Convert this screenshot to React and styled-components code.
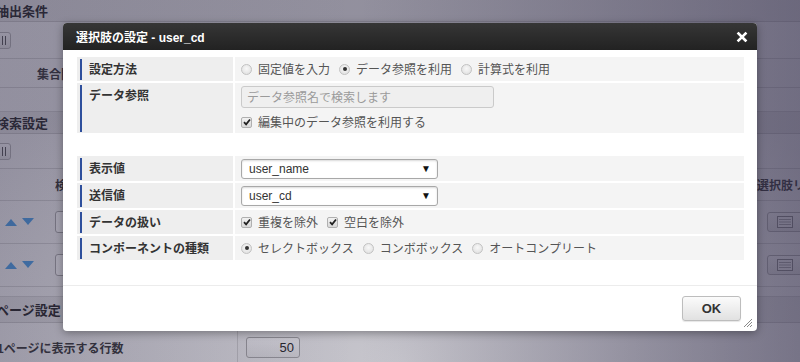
import React from "react";
import styled, { createGlobalStyle } from "styled-components";

const GlobalStyle = createGlobalStyle`
  html, body {
    margin: 0;
    padding: 0;
    width: 800px;
    height: 362px;
    overflow: hidden;
    background: #f2f2f2;
  }
  body {
    font-family: "Liberation Sans", "Noto Sans CJK JP", sans-serif;
    font-size: 12px;
    color: #333;
  }
`;

const Screen = styled.div`
  position: relative;
  width: 800px;
  height: 362px;
  overflow: hidden;
`;

/* ---------- page behind the dialog ---------- */

const Page = styled.div`
  display: flex;
  flex-direction: column;
  background: #f3f3f3;
`;

const SectionHeader = styled.div`
  height: ${(p) => p.$h || 22}px;
  display: flex;
  align-items: center;
  font-size: 13px;
  font-weight: bold;
  color: #222;
  background: #e4e4e4;
  border-bottom: 1px solid #c9c9c9;
  text-indent: -4px;
  white-space: nowrap;
`;

const Row = styled.div`
  height: ${(p) => p.$h}px;
  display: flex;
  align-items: center;
  border-bottom: 1px solid #d2d2d2;
  white-space: nowrap;
  box-sizing: border-box;
`;

const ToolButton = styled.div`
  margin-left: -9px;
  width: 20px;
  height: 17px;
  border: 1px solid #b5b5b5;
  border-radius: 3px;
  background: linear-gradient(#fafafa, #e3e3e3);
  display: flex;
  align-items: center;
  justify-content: center;
  gap: 2px;
  padding-left: 6px;
  box-sizing: border-box;

  &::before,
  &::after {
    content: "";
    width: 1px;
    height: 9px;
    background: #555;
  }
`;

const FieldLabel = styled.div`
  padding-left: 37px;
  font-weight: bold;
  font-size: 12px;
  color: #333;
`;

const GridRow = styled.div`
  height: ${(p) => p.$h}px;
  display: grid;
  grid-template-columns: 55px 1fr 43px;
  align-items: center;
  border-bottom: 1px solid #d2d2d2;
  box-sizing: border-box;
  white-space: nowrap;
  overflow: hidden;
`;

const HeadText = styled.div`
  font-weight: bold;
  font-size: 12px;
  color: #333;
  overflow: hidden;
`;

const Arrows = styled.div`
  display: flex;
  gap: 5px;
  padding-left: 5px;
`;

const SmallInput = styled.div`
  width: 60px;
  height: 20px;
  border: 1px solid #aaa;
  border-radius: 3px;
  background: #fff;
`;

const ListButton = styled.div`
  margin-left: 10px;
  width: 40px;
  height: 20px;
  border: 1px solid #b0b0b0;
  border-radius: 3px;
  background: linear-gradient(#f6f6f6, #e2e2e2);
  display: flex;
  align-items: center;
  padding-left: 9px;
  box-sizing: border-box;
`;

const PageRow = styled.div`
  height: 48px;
  display: grid;
  grid-template-columns: 238px 1fr;
  align-items: center;
  white-space: nowrap;
`;

const PageLabel = styled.div`
  font-weight: bold;
  font-size: 12px;
  text-indent: -3px;
  align-self: stretch;
  display: flex;
  align-items: center;
  border-right: 1px solid #d2d2d2;
`;

const NumberBox = styled.div`
  margin-left: 8px;
  width: 54px;
  height: 21px;
  border: 1px solid #aaa;
  border-radius: 3px;
  background: linear-gradient(#fdfdfd, #ececec);
  text-align: right;
  padding-right: 5px;
  box-sizing: border-box;
  font-size: 13px;
  line-height: 20px;
  color: #222;
`;

const Overlay = styled.div`
  position: absolute;
  inset: 0;
  background:
    linear-gradient(90deg, rgba(50, 45, 75, 0.08), rgba(50, 45, 75, 0) 45%, rgba(50, 45, 75, 0.4) 100%),
    radial-gradient(ellipse 65% 90% at 50% 100%, rgba(50, 45, 75, 0.22), rgba(50, 45, 75, 0.46));
`;

/* ---------- dialog ---------- */

const Dialog = styled.div`
  position: absolute;
  left: 63px;
  top: 23px;
  width: 694px;
  height: 308px;
  background: #fff;
  border-radius: 4px;
  box-shadow: 0 2px 8px rgba(0, 0, 0, 0.35);
  display: flex;
  flex-direction: column;
  overflow: hidden;
`;

const TitleBar = styled.div`
  height: 27px;
  flex: none;
  display: flex;
  align-items: center;
  justify-content: space-between;
  padding: 0 9px 0 13px;
  background: linear-gradient(#363636, #222);
  color: #fff;
  font-weight: bold;
  font-size: 12px;
`;

const CloseIcon = () => (
  <svg width="12" height="12" viewBox="0 0 12 12">
    <path d="M2.5 2.5 L9.5 9.5 M9.5 2.5 L2.5 9.5" stroke="#fff" strokeWidth="2.6" strokeLinecap="square" />
  </svg>
);

const Body = styled.div`
  flex: 1;
  padding: 5px 13px 0 14px;
  display: flex;
  flex-direction: column;
  gap: 21px;
`;

const FormGrid = styled.div`
  display: grid;
  grid-template-columns: 156px 1fr;
  gap: 2px;
  padding-top: 2px;
`;

const LabelCell = styled.div`
  position: relative;
  background: #eeeeee;
  padding: 4px 0 4px 12px;
  line-height: 16px;
  font-weight: bold;
  font-size: 12px;
  color: #333;
  font-family: "Noto Sans CJK JP", sans-serif;

  &::before {
    content: "";
    position: absolute;
    left: 3px;
    top: 2px;
    bottom: 1px;
    width: 2px;
    background: #2e4f9c;
  }
`;

const ValueCell = styled.div`
  background: #f4f4f4;
  padding: ${(p) => (p.$tight ? "3px 6px 2px" : "3px 6px")};
  display: flex;
  flex-direction: ${(p) => (p.$stack ? "column" : "row")};
  align-items: ${(p) => (p.$stack ? "flex-start" : "center")};
  gap: ${(p) => (p.$stack ? "5px" : "0")};
  color: #555;
  font-family: "Noto Sans CJK JP", sans-serif;
  font-size: 12px;
  line-height: 18px;
`;

const Option = styled.label`
  display: inline-flex;
  align-items: center;
  gap: 6px;
  margin-right: 9px;
  white-space: nowrap;
`;

const RadioMark = styled.span`
  width: 11px;
  height: 11px;
  box-sizing: border-box;
  border-radius: 50%;
  border: 1px solid #c2c2c2;
  background: radial-gradient(circle at 50% 40%, #f8f8f8, #dcdcdc);
  display: inline-flex;
  align-items: center;
  justify-content: center;

  &::after {
    content: "";
    width: 4px;
    height: 4px;
    border-radius: 50%;
    background: ${(p) => (p.$on ? "#333" : "transparent")};
  }
`;

const CheckMark = styled.span`
  width: 11px;
  height: 11px;
  box-sizing: border-box;
  border-radius: 2px;
  border: 1px solid #b0b0b0;
  background: linear-gradient(#f2f2f2, #d8d8d8);
  display: inline-flex;
  align-items: center;
  justify-content: center;
`;

const Tick = () => (
  <svg width="8" height="8" viewBox="0 0 8 8">
    <path d="M1 4.2 L3.1 6.3 L7 1.5" fill="none" stroke="#222" strokeWidth="1.8" />
  </svg>
);

const SearchBox = styled.div`
  width: 253px;
  height: 22px;
  box-sizing: border-box;
  border: 1px solid #cacaca;
  border-radius: 3px;
  background: #efefef;
  padding-left: 5px;
  color: #9a9a9a;
  line-height: 20px;
`;

const Select = styled.div`
  width: 197px;
  height: 20px;
  box-sizing: border-box;
  border: 1px solid #a8a8a8;
  border-radius: 3px;
  background: #fff;
  box-shadow: inset 0 1px 2px rgba(0, 0, 0, 0.15);
  display: flex;
  align-items: center;
  justify-content: space-between;
  padding: 0 6px 0 7px;
  font-family: "Liberation Sans", "Noto Sans CJK JP", sans-serif;
  font-size: 12px;
  color: #333;
`;

const Caret = styled.span`
  font-size: 10px;
  color: #111;
`;

const Footer = styled.div`
  height: 46px;
  flex: none;
  border-top: 1px solid #ececec;
  display: flex;
  justify-content: flex-end;
  align-items: flex-start;
  padding: 10px 16px 0 0;
  box-sizing: border-box;
`;

const OkButton = styled.button`
  width: 59px;
  height: 25px;
  border: 1px solid #bdbdbd;
  border-radius: 3px;
  background: linear-gradient(#fbfbfb, #e1e1e1);
  box-shadow: 0 1px 1px rgba(0, 0, 0, 0.1);
  font-family: "Liberation Sans", sans-serif;
  font-weight: bold;
  font-size: 13px;
  color: #333;
  padding: 0;
`;

const Grip = styled.div`
  position: absolute;
  right: 4px;
  bottom: 3px;
  width: 12px;
  height: 12px;
`;

const Radio = ({ on, children }) => (
  <Option>
    <RadioMark $on={on} />
    {children}
  </Option>
);

const Check = ({ children }) => (
  <Option>
    <CheckMark>
      <Tick />
    </CheckMark>
    {children}
  </Option>
);

const UpDown = () => (
  <Arrows>
    <svg width="12" height="8" viewBox="0 0 12 8">
      <path d="M0 8 L6 1 L12 8 Z" fill="#4a9ee6" />
    </svg>
    <svg width="12" height="8" viewBox="0 0 12 8">
      <path d="M0 0 L12 0 L6 7 Z" fill="#4a9ee6" />
    </svg>
  </Arrows>
);

const ListIcon = () => (
  <svg width="16" height="12" viewBox="0 0 16 12">
    <rect x="0.5" y="0.5" width="15" height="11" fill="#f4f4f4" stroke="#8a8a8a" />
    <path d="M2 3.5 H14 M2 6 H14 M2 8.5 H14" stroke="#aaa" />
  </svg>
);

export default function App() {
  return (
    <Screen>
      <GlobalStyle />
      <Page>
        <SectionHeader $h={21}>抽出条件</SectionHeader>
        <Row $h={37}>
          <ToolButton />
        </Row>
        <Row $h={29}>
          <FieldLabel>集合関数</FieldLabel>
        </Row>
        <Row $h={24} />
        <SectionHeader $h={21}>検索設定</SectionHeader>
        <Row $h={35}>
          <ToolButton />
        </Row>
        <GridRow $h={32}>
          <span />
          <HeadText>検索項目</HeadText>
          <HeadText>選択肢リスト</HeadText>
        </GridRow>
        <GridRow $h={43}>
          <UpDown />
          <SmallInput />
          <ListButton>
            <ListIcon />
          </ListButton>
        </GridRow>
        <GridRow $h={43}>
          <UpDown />
          <SmallInput />
          <ListButton>
            <ListIcon />
          </ListButton>
        </GridRow>
        <Row $h={10} />
        <SectionHeader $h={25}>ページ設定</SectionHeader>
        <PageRow>
          <PageLabel>1ページに表示する行数</PageLabel>
          <NumberBox>50</NumberBox>
        </PageRow>
      </Page>
      <Overlay />

      <Dialog>
        <TitleBar>
          <span>選択肢の設定 - user_cd</span>
          <CloseIcon />
        </TitleBar>
        <Body>
          <FormGrid>
            <LabelCell>設定方法</LabelCell>
            <ValueCell>
              <Radio>固定値を入力</Radio>
              <Radio on>データ参照を利用</Radio>
              <Radio>計算式を利用</Radio>
            </ValueCell>
            <LabelCell>データ参照</LabelCell>
            <ValueCell $stack $tight>
              <SearchBox>データ参照名で検索します</SearchBox>
              <Check>編集中のデータ参照を利用する</Check>
            </ValueCell>
          </FormGrid>
          <FormGrid>
            <LabelCell>表示値</LabelCell>
            <ValueCell $tight>
              <Select>
                <span>user_name</span>
                <Caret>▼</Caret>
              </Select>
            </ValueCell>
            <LabelCell>送信値</LabelCell>
            <ValueCell $tight>
              <Select>
                <span>user_cd</span>
                <Caret>▼</Caret>
              </Select>
            </ValueCell>
            <LabelCell>データの扱い</LabelCell>
            <ValueCell>
              <Check>重複を除外</Check>
              <Check>空白を除外</Check>
            </ValueCell>
            <LabelCell>コンポーネントの種類</LabelCell>
            <ValueCell>
              <Radio on>セレクトボックス</Radio>
              <Radio>コンボボックス</Radio>
              <Radio>オートコンプリート</Radio>
            </ValueCell>
          </FormGrid>
        </Body>
        <Footer>
          <OkButton>OK</OkButton>
        </Footer>
        <Grip>
          <svg width="12" height="12" viewBox="0 0 12 12">
            <path d="M11 3 L3 11 M11 6 L6 11 M11 9 L9 11" stroke="#8a8a8a" strokeWidth="1" />
          </svg>
        </Grip>
      </Dialog>
    </Screen>
  );
}
